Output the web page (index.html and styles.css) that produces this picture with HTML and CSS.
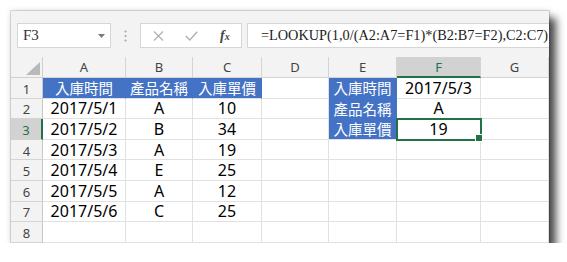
FILE: index.html
```html
<!DOCTYPE html>
<html lang="zh-Hant">
<head>
  <meta charset="UTF-8">
  <title>LOOKUP</title>
<link rel="stylesheet" href="styles.css">
</head>
<body>
  <div class="window">
    <div class="formula-bar">
      <div class="name-box">
        <span>F3</span>
        <svg width="7" height="4" viewBox="0 0 7 4"><path d="M0 0h7L3.5 4z" fill="#7a7a7a"/></svg>
      </div>
      <div class="grip">
        <svg width="3" height="12" viewBox="0 0 3 12"><circle cx="1.5" cy="1.5" r="1" fill="#a0a0a0"/><circle cx="1.5" cy="6" r="1" fill="#a0a0a0"/><circle cx="1.5" cy="10.5" r="1" fill="#a0a0a0"/></svg>
      </div>
      <div class="fx-buttons">
        <svg width="11" height="10" viewBox="0 0 11 10"><path d="M1 0.5l9 9M10 0.5l-9 9" stroke="#b0b0b0" stroke-width="1.2" fill="none"/></svg>
        <svg width="13" height="10" viewBox="0 0 13 10"><path d="M0.8 5l4 4L12.2 0.8" stroke="#b0b0b0" stroke-width="1.4" fill="none"/></svg>
        <span class="fx">f<small>x</small></span>
      </div>
      <div class="formula">=LOOKUP(1,0/(A2:A7=F1)*(B2:B7=F2),C2:C7)</div>
    </div>

    <div class="sheet">
      <div class="corner"><span class="tri"></span></div>
      <div class="col-head">A</div>
      <div class="col-head">B</div>
      <div class="col-head">C</div>
      <div class="col-head">D</div>
      <div class="col-head">E</div>
      <div class="col-head active">F</div>
      <div class="col-head">G</div>

      <div class="row-head">1</div>
      <div class="cell blue cjk">入庫時間</div>
      <div class="cell blue cjk">產品名稱</div>
      <div class="cell blue cjk">入庫單價</div>
      <div class="cell"></div>
      <div class="cell blue blue-down cjk">入庫時間</div>
      <div class="cell">2017/5/3</div>
      <div class="cell"></div>

      <div class="row-head">2</div>
      <div class="cell">2017/5/1</div>
      <div class="cell">A</div>
      <div class="cell">10</div>
      <div class="cell"></div>
      <div class="cell blue blue-down cjk">產品名稱</div>
      <div class="cell">A</div>
      <div class="cell"></div>

      <div class="row-head active">3</div>
      <div class="cell">2017/5/2</div>
      <div class="cell">B</div>
      <div class="cell">34</div>
      <div class="cell"></div>
      <div class="cell blue cjk">入庫單價</div>
      <div class="cell selected">19</div>
      <div class="cell"></div>

      <div class="row-head">4</div>
      <div class="cell">2017/5/3</div>
      <div class="cell">A</div>
      <div class="cell">19</div>
      <div class="cell"></div>
      <div class="cell"></div>
      <div class="cell"></div>
      <div class="cell"></div>

      <div class="row-head">5</div>
      <div class="cell">2017/5/4</div>
      <div class="cell">E</div>
      <div class="cell">25</div>
      <div class="cell"></div>
      <div class="cell"></div>
      <div class="cell"></div>
      <div class="cell"></div>

      <div class="row-head">6</div>
      <div class="cell">2017/5/5</div>
      <div class="cell">A</div>
      <div class="cell">12</div>
      <div class="cell"></div>
      <div class="cell"></div>
      <div class="cell"></div>
      <div class="cell"></div>

      <div class="row-head">7</div>
      <div class="cell">2017/5/6</div>
      <div class="cell">C</div>
      <div class="cell">25</div>
      <div class="cell"></div>
      <div class="cell"></div>
      <div class="cell"></div>
      <div class="cell"></div>

      <div class="row-head">8</div>
      <div class="cell"></div>
      <div class="cell"></div>
      <div class="cell"></div>
      <div class="cell"></div>
      <div class="cell"></div>
      <div class="cell"></div>
      <div class="cell"></div>
    </div>
  </div>
</body>
</html>
```

FILE: styles.css
```css
* {
  box-sizing: border-box;
}

body {
  margin: 0;
  padding: 11px 0 0 11px;
  background-color: #fff;
  font-family: "Noto Sans", "Noto Sans CJK TC", sans-serif;
}

.window {
  width: 538px;
  height: 232px;
  background-color: #f3f3f3;
  overflow: hidden;
  box-shadow: 0 0 0 1px rgba(0, 0, 0, 0.12), 7px 7px 8px rgba(0, 0, 0, 0.7), 0 0 6px rgba(0, 0, 0, 0.15);
}

/* formula bar */
.formula-bar {
  display: flex;
  height: 46px;
  padding: 12px 0 9px 6px;
}

.name-box {
  display: flex;
  align-items: center;
  justify-content: space-between;
  width: 94px;
  padding: 0 5px 0 5px;
  background-color: #fff;
  border: 1px solid #d6d6d6;
  font-family: "Liberation Serif", serif;
  font-size: 15px;
  color: #333;
}

.grip {
  display: flex;
  align-items: center;
  justify-content: center;
  width: 29px;
}

.fx-buttons {
  display: flex;
  align-items: center;
  width: 102px;
  padding: 0 0 0 12px;
  gap: 21px;
  background-color: #fff;
  border: 1px solid #d6d6d6;
}

.fx {
  font-family: "Liberation Serif", serif;
  font-style: italic;
  font-weight: bold;
  font-size: 14px;
  color: #444;
  margin-left: 1px;
}

.fx small {
  font-size: 10px;
}

.formula {
  flex: 1;
  display: flex;
  align-items: center;
  margin-left: 5px;
  padding-left: 13px;
  background-color: #fff;
  border: 1px solid #d6d6d6;
  border-right: none;
  font-family: "Liberation Serif", serif;
  font-size: 14.3px;
  color: #222;
  white-space: nowrap;
}

/* sheet grid */
.sheet {
  display: grid;
  grid-template-columns: 32px 83px 67px 69px 67px 68px 84px 68px;
  grid-template-rows: 21px repeat(8, 20.6px);
  background-color: #fff;
}

.corner {
  display: flex;
  justify-content: flex-end;
  align-items: flex-end;
  padding: 0 2px 2px 0;
  background-color: #f3f3f3;
  border-right: 1px solid #d0d0d0;
  border-bottom: 1px solid #d0d0d0;
}

.tri {
  width: 14px;
  height: 13px;
  background-color: #b9b9b9;
  clip-path: polygon(100% 0, 100% 100%, 0 100%);
}

.col-head,
.row-head {
  display: flex;
  align-items: center;
  justify-content: center;
  background-color: #f3f3f3;
  font-size: 13px;
  color: #444;
  border-right: 1px solid #d4d4d4;
  border-bottom: 1px solid #d4d4d4;
}

.col-head.active {
  background-color: #d2d2d2;
  color: #217346;
  border-bottom: 2px solid #217346;
}

.row-head {
  border-right-color: #c8c8c8;
  padding-top: 2px;
}

.row-head.active {
  background-color: #d2d2d2;
  color: #217346;
  border-right: 2px solid #217346;
}

.cell {
  display: flex;
  align-items: center;
  justify-content: center;
  font-size: 16px;
  color: #000;
  border-right: 1px solid #e1e1e1;
  border-bottom: 1px solid #e1e1e1;
  white-space: nowrap;
}

.cell.cjk {
  font-size: 14.5px;
}

.cell.blue {
  background-color: #4472c4;
  color: #fff;
  border-right-color: #4472c4;
}

.cell.blue-down {
  border-bottom-color: #4472c4;
}

.cell.selected {
  position: relative;
  outline: 2px solid #217346;
  outline-offset: -1px;
}

.cell.selected::after {
  content: "";
  position: absolute;
  right: -3px;
  bottom: -3px;
  width: 6px;
  height: 6px;
  background-color: #217346;
  border: 1px solid #fff;
}
```
